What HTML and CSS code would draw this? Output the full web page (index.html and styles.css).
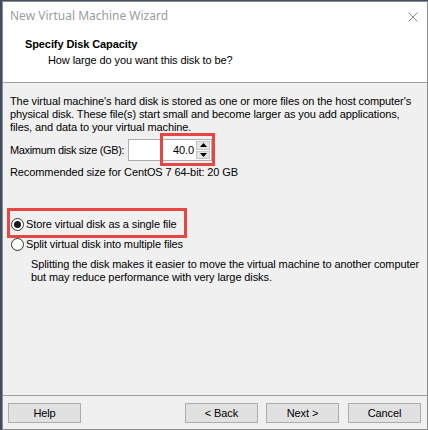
FILE: index.html
```html
<!DOCTYPE html>
<html>
<head>
<meta charset="utf-8">
<link rel="stylesheet" href="styles.css">
</head>
<body>
<div class="window">
  <div class="titlebar">
    <span class="title">New Virtual Machine Wizard</span>
    <svg class="close" width="10" height="10" viewBox="0 0 10 10"><path d="M0.5 0.5L9.5 9.5M9.5 0.5L0.5 9.5" stroke="#8a8a8a" stroke-width="1" fill="none"/></svg>
  </div>
  <div class="header">
    <div class="h-title">Specify Disk Capacity</div>
    <div class="h-sub">How large do you want this disk to be?</div>
  </div>
  <div class="body">
    <p class="para">The virtual machine's hard disk is stored as one or more files on the host computer's<br>physical disk. These file(s) start small and become larger as you add applications,<br>files, and data to your virtual machine.</p>
    <div class="size-row">
      <span class="size-label">Maximum disk size (GB):</span>
      <div class="spin">
        <div class="spin-field">40.0</div>
        <div class="spin-btns">
          <div class="spin-btn"><svg width="7" height="4" viewBox="0 0 7 4"><path d="M3.5 0L7 4H0Z" fill="#000"/></svg></div>
          <div class="spin-btn"><svg width="7" height="4" viewBox="0 0 7 4"><path d="M0 0H7L3.5 4Z" fill="#000"/></svg></div>
        </div>
        <span class="mark mark-spin"></span>
      </div>
    </div>
    <div class="recommend">Recommended size for CentOS 7 64-bit: 20 GB</div>
    <div class="radios">
      <div class="radio-row">
        <span class="radio checked"></span>
        <span>Store virtual disk as a single file</span>
        <span class="mark mark-radio"></span>
      </div>
      <div class="radio-row">
        <span class="radio"></span>
        <span>Split virtual disk into multiple files</span>
      </div>
    </div>
    <p class="desc">Splitting the disk makes it easier to move the virtual machine to another computer<br>but may reduce performance with very large disks.</p>
  </div>
  <div class="footer">
    <button class="btn">Help</button>
    <div class="btn-group">
      <button class="btn">&lt; Back</button>
      <button class="btn">Next &gt;</button>
      <button class="btn btn-cancel">Cancel</button>
    </div>
  </div>
</div>
</body>
</html>
```

FILE: styles.css
```css
html, body {
  margin: 0;
  padding: 0;
}
body {
  width: 428px;
  height: 430px;
  background: #3d4f63;
  overflow: hidden;
  font-family: "Liberation Sans", Arial, sans-serif;
  font-size: 11px;
  letter-spacing: -0.1px;
  color: #000;
}
.window {
  box-sizing: border-box;
  margin: 1px 0 0 2px;
  width: 426px;
  height: 429px;
  border: 1px solid #8c8c8c;
  background: #f0f0f0;
  display: flex;
  flex-direction: column;
}
.titlebar {
  height: 29px;
  background: #fff;
  display: flex;
  align-items: center;
  justify-content: space-between;
  padding: 0 9px 0 7px;
  flex: none;
}
.title {
  font-family: "Noto Sans", sans-serif;
  font-size: 12px;
  letter-spacing: 0;
  color: #9c9c9c;
  line-height: 16px;
  margin-top: -1px;
}
.close {
  display: block;
}
.header {
  height: 51px;
  background: #fff;
  border-bottom: 1px solid #a0a0a0;
  flex: none;
  box-sizing: content-box;
}
.h-title {
  font-weight: bold;
  line-height: 13px;
  padding: 7px 0 0 22px;
}
.h-sub {
  line-height: 13px;
  padding: 3px 0 0 45px;
}
.body {
  flex: 1;
  padding: 12px 0 0 7px;
}
.para {
  margin: 0;
  line-height: 13px;
  white-space: nowrap;
}
.size-row {
  display: flex;
  align-items: center;
  margin-top: 5px;
  height: 22px;
}
.size-label {
  width: 118px;
  line-height: 13px;
  white-space: nowrap;
  letter-spacing: -0.35px;
  flex: none;
}
.spin {
  position: relative;
  display: flex;
  height: 22px;
}
.spin-field {
  box-sizing: border-box;
  width: 68px;
  height: 22px;
  background: #fff;
  border: 1px solid #abadb3;
  border-right: none;
  text-align: right;
  line-height: 20px;
  padding-right: 2px;
}
.spin-btns {
  box-sizing: border-box;
  width: 16px;
  height: 22px;
  border: 1px solid #abadb3;
  border-left: none;
  background: #fff;
  display: flex;
  flex-direction: column;
  padding: 1px 1px 1px 0;
  gap: 1px;
}
.spin-btn {
  flex: 1;
  background: #e5e5e5;
  border: 1px solid #c4c4c4;
  display: flex;
  align-items: center;
  justify-content: center;
}
.spin-btn svg {
  display: block;
}
.mark {
  position: absolute;
  border: 3px solid #e84545;
  box-sizing: border-box;
  pointer-events: none;
}
.mark-spin {
  left: 32px;
  top: -6px;
  width: 55px;
  height: 33px;
}
.recommend {
  margin-top: 5px;
  line-height: 13px;
}
.radios {
  margin-top: 35px;
}
.radio-row {
  position: relative;
  display: flex;
  align-items: center;
  height: 20px;
  line-height: 13px;
}
.radio {
  box-sizing: border-box;
  width: 13px;
  height: 13px;
  border: 1px solid #333;
  border-radius: 50%;
  background: #fff;
  margin: 0 2px 0 1px;
  display: flex;
  align-items: center;
  justify-content: center;
  flex: none;
}
.radio.checked::after {
  content: "";
  width: 7px;
  height: 7px;
  border-radius: 50%;
  background: #1a1a1a;
}
.mark-radio {
  left: -3px;
  top: -6px;
  width: 180px;
  height: 30px;
}
.desc {
  margin: 4px 0 0 21px;
  line-height: 13px;
  white-space: nowrap;
}
.footer {
  flex: none;
  height: 33px;
  border-top: 1px solid #a0a0a0;
  box-sizing: content-box;
  display: flex;
  justify-content: space-between;
  align-items: flex-start;
  padding: 0 6px 0 5px;
}
.btn-group {
  display: flex;
  gap: 8px;
}
.btn {
  margin-top: 7px;
  box-sizing: border-box;
  width: 73px;
  height: 20px;
  border: 1px solid #adadad;
  background: #e1e1e1;
  font-family: "Liberation Sans", Arial, sans-serif;
  font-size: 11px;
  letter-spacing: -0.1px;
  color: #000;
  padding: 0;
  line-height: 18px;
}
.btn-cancel {
  margin-left: 1px;
}
```
